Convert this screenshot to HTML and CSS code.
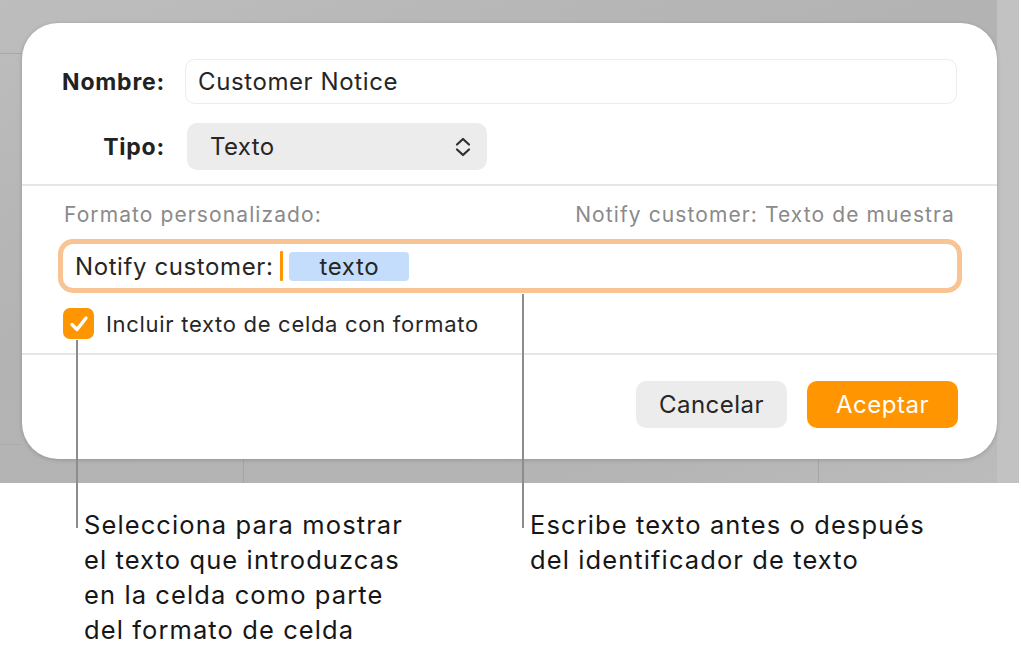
FILE: index.html
```html
<!DOCTYPE html>
<html lang="es">
<head>
<meta charset="utf-8">
<title>Formato personalizado</title>
<link rel="stylesheet" href="styles.css">
</head>
<body>
<div class="page">
  <div class="backdrop">
    <div class="dialog">
      <div class="section top">
        <div class="row">
          <div class="label">Nombre:</div>
          <div class="name-input">Customer Notice</div>
        </div>
        <div class="row">
          <div class="label">Tipo:</div>
          <div class="select">
            <span>Texto</span>
            <svg class="chev" width="18" height="22" viewBox="0 0 18 22"><polyline points="3,8.5 9,3 15,8.5" fill="none" stroke="#2e2e2e" stroke-width="2.2" stroke-linecap="round" stroke-linejoin="round"/><polyline points="3,13.5 9,19 15,13.5" fill="none" stroke="#2e2e2e" stroke-width="2.2" stroke-linecap="round" stroke-linejoin="round"/></svg>
          </div>
        </div>
      </div>
      <div class="section middle">
        <div class="fmt-head">
          <span>Formato personalizado:</span>
          <span>Notify customer: Texto de muestra</span>
        </div>
        <div class="fmt-field">
          <span class="fmt-text">Notify customer:</span>
          <span class="caret"></span>
          <span class="token">texto</span>
        </div>
        <div class="check-row">
          <span class="checkbox">
            <svg width="24" height="24" viewBox="0 0 24 24"><polyline points="5,12.5 10,17.5 19,6" fill="none" stroke="#fff" stroke-width="3.4" stroke-linecap="round" stroke-linejoin="round"/></svg>
          </span>
          <span class="check-label">Incluir texto de celda con formato</span>
        </div>
      </div>
      <div class="section bottom">
        <button class="btn cancel">Cancelar</button>
        <button class="btn ok">Aceptar</button>
      </div>
    </div>
  </div>
  <div class="notes">
    <p class="note note-left">Selecciona para mostrar<br>el texto que introduzcas<br>en la celda como parte<br>del formato de celda</p>
    <p class="note note-right">Escribe texto antes o después<br>del identificador de texto</p>
  </div>
  <span class="leader leader-left"></span>
  <span class="leader leader-right"></span>
</div>
</body>
</html>
```

FILE: styles.css
```css
* { box-sizing: border-box; }
html, body { margin: 0; padding: 0; background: #fff; }
body {
  font-family: Inter, "Noto Sans", "Liberation Sans", sans-serif;
  color: #262626;
}
.page {
  position: relative;
  width: 1021px;
  height: 654px;
  overflow: hidden;
}
.backdrop {
  width: 1019px;
  height: 483px;
  padding: 23px 0 0 22px;
  background:
    linear-gradient(90deg, transparent 997px, #c2c2c2 997px) 0 0 / 100% 100% no-repeat,
    linear-gradient(90deg, transparent 243px, #a6a6a6 243px, #a6a6a6 244px, transparent 244px, transparent 818px, #a6a6a6 818px, #a6a6a6 819px, transparent 819px) 0 100% / 100% 24px no-repeat,
    linear-gradient(180deg, transparent 53px, #a8a8a8 53px, #a8a8a8 54px, transparent 54px, transparent 444px, #acacac 444px, #acacac 445px, transparent 445px) 0 0 / 22px 100% no-repeat,
    linear-gradient(160deg, #bdbdbd 0%, #b3b3b3 40%, #b4b4b4 80%, #bcbcbc 100%);
}
.dialog {
  width: 975px;
  height: 436px;
  background: #fff;
  border-radius: 36px;
  box-shadow: 0 1px 4px rgba(0,0,0,0.18);
  display: flex;
  flex-direction: column;
}
.section.top {
  padding: 36px 40px 14px 0;
  border-bottom: 2px solid #e6e6e6;
  display: flex;
  flex-direction: column;
  gap: 19px;
}
.row {
  display: flex;
  align-items: center;
}
.label {
  width: 143px;
  text-align: right;
  font-weight: 700;
  font-size: 23px;
  letter-spacing: 0.8px;
  color: #222;
}
.name-input {
  margin-left: 20px;
  flex: 1;
  height: 45px;
  border: 1.5px solid #ececec;
  border-radius: 10px;
  padding-left: 12px;
  display: flex;
  align-items: center;
  font-size: 24px;
  letter-spacing: 0.6px;
  color: #262626;
}
.select {
  margin-left: 22px;
  width: 300px;
  height: 47px;
  border-radius: 10px;
  background: #ececec;
  display: flex;
  align-items: center;
  justify-content: space-between;
  padding: 0 15px 0 23px;
  font-size: 24px;
  letter-spacing: 0.4px;
  color: #262626;
}
.chev { display: block; }
.section.middle {
  padding: 18px 35px 14px 36px;
  border-bottom: 2px solid #e6e6e6;
}
.fmt-head {
  display: flex;
  justify-content: space-between;
  padding: 0 7px 0 6px;
  font-size: 21px;
  letter-spacing: 1.1px;
  line-height: 22px;
  color: #8a8a8a;
}
.fmt-field {
  margin-top: 13px;
  height: 54px;
  border: 5px solid #f9c493;
  border-radius: 15px;
  display: flex;
  align-items: center;
  padding-left: 12px;
  font-size: 24px;
  letter-spacing: 0.6px;
  color: #262626;
}
.caret {
  width: 3px;
  height: 30px;
  background: #ff9500;
  border-radius: 1px;
  margin-left: 7px;
}
.token {
  margin-left: 6px;
  width: 120px;
  height: 29px;
  background: #c4ddfc;
  border-radius: 4px;
  display: flex;
  align-items: center;
  justify-content: center;
}
.check-row {
  margin-top: 15px;
  display: flex;
  align-items: center;
  padding-left: 5px;
  height: 31px;
}
.checkbox {
  width: 31px;
  height: 31px;
  border-radius: 7px;
  background: #ff9500;
  display: flex;
  align-items: center;
  justify-content: center;
}
.check-label {
  margin-left: 12px;
  font-size: 22px;
  letter-spacing: 0.7px;
  color: #262626;
}
.section.bottom {
  padding: 26px 39px 0 0;
  display: flex;
  justify-content: flex-end;
  gap: 20px;
}
.btn {
  width: 151px;
  height: 47px;
  border: none;
  border-radius: 10px;
  font-family: inherit;
  font-size: 24px;
  letter-spacing: 0.5px;
}
.btn.cancel { background: #ececec; color: #262626; }
.btn.ok { background: #ff9500; color: #fff; }
.notes {
  display: flex;
  padding-top: 24px;
}
.note {
  margin: 0;
  font-size: 25.5px;
  letter-spacing: 1.1px;
  line-height: 35px;
  color: #161616;
}
.note-left { margin-left: 84px; width: 446px; }
.note-right { margin-left: 0; }
.leader {
  position: absolute;
  width: 2px;
  background: #8c8c8c;
}
.leader-left { left: 76px; top: 340px; height: 188px; }
.leader-right { left: 522px; top: 294px; height: 234px; }
```
